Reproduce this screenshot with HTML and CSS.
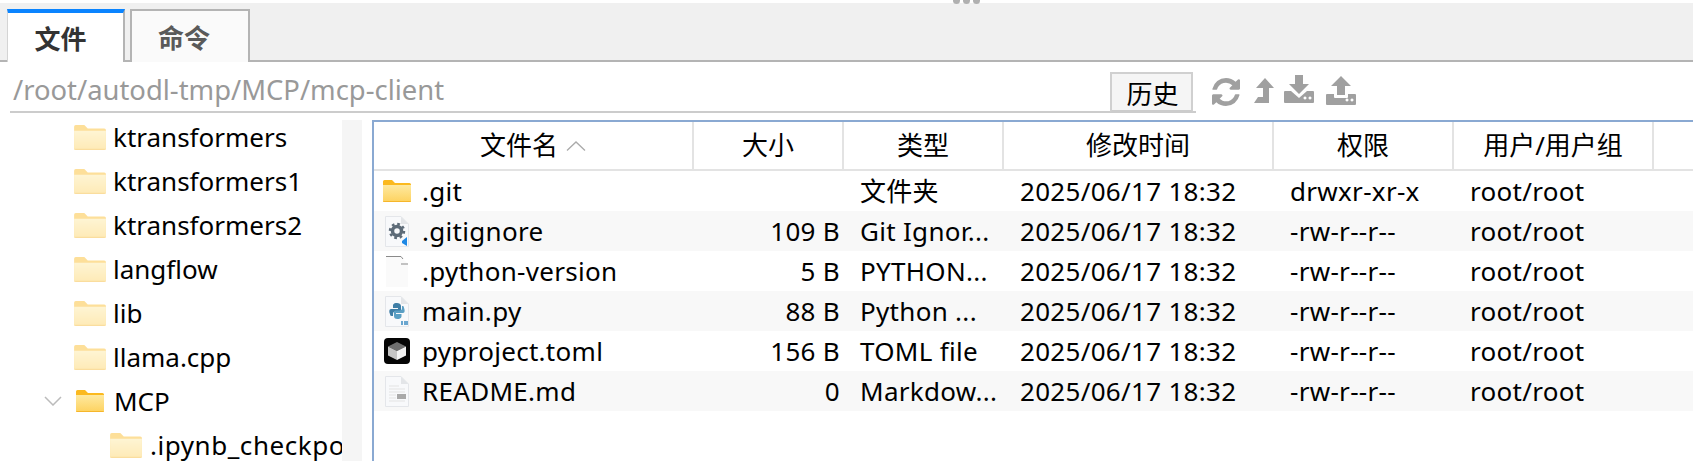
FILE: index.html
```html
<!DOCTYPE html>
<html lang="zh-CN">
<head>
  <meta charset="UTF-8">
  <title>文件</title>
  <link rel="stylesheet" href="styles.css">
</head>
<body>
  <svg class="defs" width="0" height="0">
    <defs>
      <linearGradient id="folderFill" x1="0" y1="0" x2="0" y2="1">
        <stop offset="0" stop-color="#fee9a0"/>
        <stop offset="1" stop-color="#fdd25f"/>
      </linearGradient>
      <symbol id="folder" viewBox="0 0 28 22">
        <path d="M0 1.5Q0 0 1.5 0H9l3 3H26.500Q28 3 28 4.500V20.500Q28 22 26.500 22H1.500Q0 22 0 20.500Z" fill="#fbb91f"/>
        <path d="M0 5H28V20.500Q28 22 26.500 22H1.500Q0 22 0 20.500Z" fill="url(#folderFill)"/>
        <path d="M0 21H28V20.500Q28 22 26.500 22H1.500Q0 22 0 20.500Z" fill="#f6b62b"/>
      </symbol>
      <symbol id="page" viewBox="0 0 24 31">
        <path d="M.5.500H16L23.500 8V30.500H.5Z" fill="#f8f9fb" stroke="#e4e6ea"/>
        <path d="M16 .5V8H23.500Z" fill="#e3e5e8"/>
      </symbol>
    </defs>
  </svg>

  <div class="handle"><i></i><i></i><i></i></div>

  <div class="tabbar">
    <div class="tab active">文件</div>
    <div class="tab">命令</div>
  </div>

  <div class="pathbar">
    <div class="pathrow">
      <div class="path">/root/autodl-tmp/MCP/mcp-client</div>
      <div class="history">历史</div>
    </div>
    <div class="tools">
      <svg class="ico-refresh" viewBox="128 128 1536 1536"><path d="M1639 1056q0 5-1 7-64 268-268 434.500t-478 166.500q-146 0-282.500-55t-243.500-157l-129 129q-19 19-45 19t-45-19-19-45v-448q0-26 19-45t45-19h448q26 0 45 19t19 45-19 45l-137 137q71 66 161 102t187 36q134 0 250-65t186-179q11-17 53-117 8-23 30-23h192q13 0 22.500 9.500t9.500 22.500zm25-800v448q0 26-19 45t-45 19h-448q-26 0-45-19t-19-45 19-45l138-138q-148-137-349-137-134 0-250 65t-186 179q-11 17-53 117-8 23-30 23h-199q-13 0-22.500-9.500t-9.500-22.500v-7q65-268 270-434.500t480-166.500q146 0 284 55.500t245 156.500l130-129q19-19 45-19t45 19 19 45z"/></svg>
      <svg class="ico-up" viewBox="0 0 20 26"><path d="M11 0L20 10H15V25H0L4 19H9V10H2Z"/></svg>
      <svg class="ico-down" viewBox="0 0 30 28"><path d="M11 0H19V9H25L15 19 5 9H11Z"/><path fill-rule="evenodd" d="M1 16H7L15 23 23 16H29Q30 16 30 17V27Q30 28 29 28H1Q0 28 0 27V17Q0 16 1 16ZM21 21.500a1.500 1.500 0 1 0 .01 0ZM26 21.500a1.500 1.500 0 1 0 .01 0Z"/></svg>
      <svg class="ico-upl" viewBox="0 0 30 29"><path d="M15 0L25 10H19V19H11V10H5Z"/><path fill-rule="evenodd" d="M1 18H8V21Q8 22 9 22H21Q22 22 22 21V18H29Q30 18 30 19V28Q30 29 29 29H1Q0 29 0 28V19Q0 18 1 18ZM21 22.500a1.500 1.500 0 1 0 .01 0ZM26 22.500a1.500 1.500 0 1 0 .01 0Z"/></svg>
    </div>
  </div>

  <div class="main">
    <div class="tree">
      <div class="node"><svg class="tree-folder faded"><use href="#folder"/></svg><span>ktransformers</span></div>
      <div class="node"><svg class="tree-folder faded"><use href="#folder"/></svg><span>ktransformers1</span></div>
      <div class="node"><svg class="tree-folder faded"><use href="#folder"/></svg><span>ktransformers2</span></div>
      <div class="node"><svg class="tree-folder faded"><use href="#folder"/></svg><span>langflow</span></div>
      <div class="node"><svg class="tree-folder faded"><use href="#folder"/></svg><span>lib</span></div>
      <div class="node"><svg class="tree-folder faded"><use href="#folder"/></svg><span>llama.cpp</span></div>
      <div class="node open">
        <svg class="chevron" viewBox="0 0 18 10"><path d="M1 1L9 9 17 1"/></svg>
        <svg class="tree-folder"><use href="#folder"/></svg><span>MCP</span>
      </div>
      <div class="node child"><svg class="tree-folder faded"><use href="#folder"/></svg><span>.ipynb_checkpoints</span></div>
    </div>
    <div class="tree-scroll"></div>

    <div class="files">
      <div class="row head">
        <div class="cell">文件名<svg class="sort" viewBox="0 0 20 10"><path d="M1 9.500L10 1 19 9.500"/></svg></div>
        <div class="cell">大小</div>
        <div class="cell">类型</div>
        <div class="cell">修改时间</div>
        <div class="cell">权限</div>
        <div class="cell">用户/用户组</div>
      </div>

      <div class="row">
        <div class="name"><svg class="file-ico folder-ico"><use href="#folder"/></svg>.git</div>
        <div class="size"></div>
        <div class="text">文件夹</div>
        <div class="text">2025/06/17 18:32</div>
        <div class="text">drwxr-xr-x</div>
        <div class="text">root/root</div>
      </div>
      <div class="row">
        <div class="name">
          <svg class="file-ico" viewBox="0 0 24 31">
            <use href="#page" width="24" height="31"/>
            <circle cx="12" cy="15" r="4.500" fill="none" stroke="#5d6b78" stroke-width="3.500"/>
            <circle cx="12" cy="15" r="7" fill="none" stroke="#5d6b78" stroke-width="2.500" stroke-dasharray="2.700 2.800"/>
            <path d="M17 25L22 21V30L17 27Z" fill="#1e88e5"/>
          </svg>.gitignore
        </div>
        <div class="size">109 B</div>
        <div class="text">Git Ignor...</div>
        <div class="text">2025/06/17 18:32</div>
        <div class="text">-rw-r--r--</div>
        <div class="text">root/root</div>
      </div>
      <div class="row">
        <div class="name">
          <svg class="file-ico" viewBox="0 0 24 31">
            <path d="M1 1H16L23 8V31H1Z" fill="#fafafa"/>
            <path d="M1 .5H16L18 3M16 8H23" fill="none" stroke="#8a8a8a"/>
          </svg>.python-version
        </div>
        <div class="size">5 B</div>
        <div class="text">PYTHON...</div>
        <div class="text">2025/06/17 18:32</div>
        <div class="text">-rw-r--r--</div>
        <div class="text">root/root</div>
      </div>
      <div class="row">
        <div class="name">
          <svg class="file-ico" viewBox="0 0 24 31">
            <use href="#page" width="24" height="31"/>
            <path d="M12 7C8 7 8 9 8 10V12H13V13H6C4 13 4 16 5 18 5 20 6 20 8 20V18C8 16 9 15.500 11 15.500H14C15 15.500 16 15 16 14V10C16 8 14 7 12 7Z" fill="#3f7ea6"/>
            <path d="M12.500 23C16 23 16.500 21 16.500 20V18H11V17H18C20 17 20 14 19 12 19 10 18 10 17 10V12C17 14 16 14.500 14 14.500H11C9.500 14.500 9 15 9 16V20C9 22 10 23 12.500 23Z" fill="#5a9fc4"/>
            <path d="M16 25H18V29H16ZM19 25H23V29H19Z" fill="#6aa6cf"/>
          </svg>main.py
        </div>
        <div class="size">88 B</div>
        <div class="text">Python ...</div>
        <div class="text">2025/06/17 18:32</div>
        <div class="text">-rw-r--r--</div>
        <div class="text">root/root</div>
      </div>
      <div class="row">
        <div class="name">
          <svg class="file-ico toml" viewBox="0 0 26 26">
            <rect width="26" height="26" rx="4" fill="#050505"/>
            <path d="M13 4L22 8.500 13 13 4 8.500Z" fill="#6f6f6f"/>
            <path d="M4 8.500L13 13V22L4 17.500Z" fill="#c4c4c4"/>
            <path d="M22 8.500L13 13V22L22 17.500Z" fill="#f2f2f2"/>
          </svg>pyproject.toml
        </div>
        <div class="size">156 B</div>
        <div class="text">TOML file</div>
        <div class="text">2025/06/17 18:32</div>
        <div class="text">-rw-r--r--</div>
        <div class="text">root/root</div>
      </div>
      <div class="row">
        <div class="name">
          <svg class="file-ico" viewBox="0 0 24 31">
            <use href="#page" width="24" height="31"/>
            <path d="M4 10H14M4 13H20M4 16H20M4 19H11M4 22H11M4 25H20" stroke="#e3e3e3" fill="none"/>
            <rect x="12" y="18" width="9" height="5" fill="#a9a9a9"/>
          </svg>README.md
        </div>
        <div class="size">0</div>
        <div class="text">Markdow...</div>
        <div class="text">2025/06/17 18:32</div>
        <div class="text">-rw-r--r--</div>
        <div class="text">root/root</div>
      </div>
    </div>
  </div>
</body>
</html>
```

FILE: styles.css
```css
* {
  box-sizing: border-box;
}
html, body {
  margin: 0;
  padding: 0;
  height: 461px;
  overflow: hidden;
  background: #fff;
}
body {
  font-family: "Noto Sans", "Noto Sans CJK SC", sans-serif;
  font-size: 26px;
  color: #000;
  position: relative;
}
.defs {
  position: absolute;
}

/* drag handle, cut by the window edge */
.handle {
  position: absolute;
  top: -3px;
  left: 953px;
  display: flex;
  gap: 3px;
  z-index: 2;
}
.handle i {
  width: 7px;
  height: 7px;
  border-radius: 50%;
  background: #b0b0b0;
}

.tabbar {
  margin-top: 3px;
  height: 59px;
  padding: 6px 0 0 7px;
  display: flex;
  gap: 5px;
  background: #f0f0f0;
  border-bottom: 2px solid #b4b4b4;
}
.tab {
  width: 120px;
  height: 53px;
  padding-right: 12px;
  display: flex;
  align-items: center;
  justify-content: center;
  font-family: "Noto Sans CJK SC", sans-serif;
  font-size: 26px;
  font-weight: 700;
  color: #5a5a5a;
  background: #fafafa;
  border: 2px solid #b4b4b4;
  border-bottom-width: 0;
}
.tab.active {
  width: 118px;
  padding-right: 10px;
  color: #333;
  background: #fff;
  border-top: 4px solid #0a84ff;
  border-left: 1px solid #d4d4d4;
}

.pathbar {
  height: 58px;
  padding: 10px 0 0 10px;
  display: flex;
}
.pathrow {
  width: 1186px;
  height: 41px;
  display: flex;
  justify-content: space-between;
  border-bottom: 2px solid #ccc;
}
.path {
  padding-left: 3px;
  font-size: 27.4px;
  line-height: 36px;
  color: #999;
}
.history {
  width: 83px;
  height: 40px;
  margin-right: 3px;
  padding-left: 2px;
  display: flex;
  align-items: center;
  justify-content: center;
  font-family: "Noto Sans CJK SC", sans-serif;
  background: #f5f5f5;
  border: 2px solid #d0d0d0;
  border-bottom-color: #ccc;
}
.tools {
  margin-left: 16px;
  height: 41px;
  display: flex;
  align-items: flex-start;
}
.tools svg {
  fill: #a0a0a0;
}
.ico-refresh {
  width: 28px;
  height: 28px;
  margin-top: 6px;
}
.ico-up {
  width: 20px;
  height: 26px;
  margin: 6px 0 0 14px;
}
.ico-down {
  width: 30px;
  height: 28px;
  margin: 3px 0 0 10px;
}
.ico-upl {
  width: 30px;
  height: 29px;
  margin: 4px 0 0 12px;
}

.main {
  display: flex;
  height: 341px;
}
.tree {
  width: 342px;
  margin-top: -5px;
  overflow: hidden;
}
.node {
  height: 44px;
  padding-left: 74px;
  display: flex;
  align-items: center;
  white-space: nowrap;
}
.node span {
  margin-left: 7px;
}
.node.open {
  padding-left: 44px;
}
.node.child {
  padding-left: 110px;
}
.node.child span {
  margin-left: 8px;
  letter-spacing: .55px;
}
.tree-folder {
  flex: none;
  width: 32px;
  height: 25px;
}
.tree-folder.faded {
  opacity: .45;
}
.node.open .tree-folder {
  width: 28px;
  height: 22px;
  margin-left: 14px;
}
.node.open span {
  margin-left: 10px;
}
.chevron {
  flex: none;
  width: 18px;
  height: 10px;
  fill: none;
  stroke: #bbb;
  stroke-width: 1.5;
}
.tree-scroll {
  width: 20px;
  background: #f5f5f5;
}

.files {
  margin-left: 10px;
  flex: 1;
  border-top: 2px solid #8aa9d2;
  border-left: 2px solid #8aa9d2;
}
.row {
  display: grid;
  grid-template-columns: 320px 150px 160px 270px 180px 200px;
  height: 40px;
  line-height: 40px;
  letter-spacing: .3px;
  white-space: nowrap;
}
.row:nth-child(odd) {
  background: #f8f8f8;
}
.row.head {
  height: 49px;
  background: #fff;
  border-bottom: 2px solid #e3e3e3;
  line-height: 47px;
  letter-spacing: 0;
}
.cell {
  display: flex;
  align-items: center;
  justify-content: center;
  border-right: 2px solid #e3e3e3;
}
.sort {
  width: 20px;
  height: 10px;
  margin-left: 8px;
  fill: none;
  stroke: #aaa;
  stroke-width: 1.3;
}
.name {
  display: flex;
  align-items: center;
  padding-left: 11px;
}
.file-ico {
  flex: none;
  width: 24px;
  height: 31px;
  margin: 0 13px 0 0;
}
.folder-ico {
  width: 28px;
  height: 22px;
  margin: 0 11px 0 -2px;
}
.file-ico.toml {
  width: 26px;
  height: 26px;
  margin: 0 12px 0 -1px;
}
.size {
  text-align: right;
  padding-right: 4px;
}
.text {
  padding-left: 16px;
}
```
